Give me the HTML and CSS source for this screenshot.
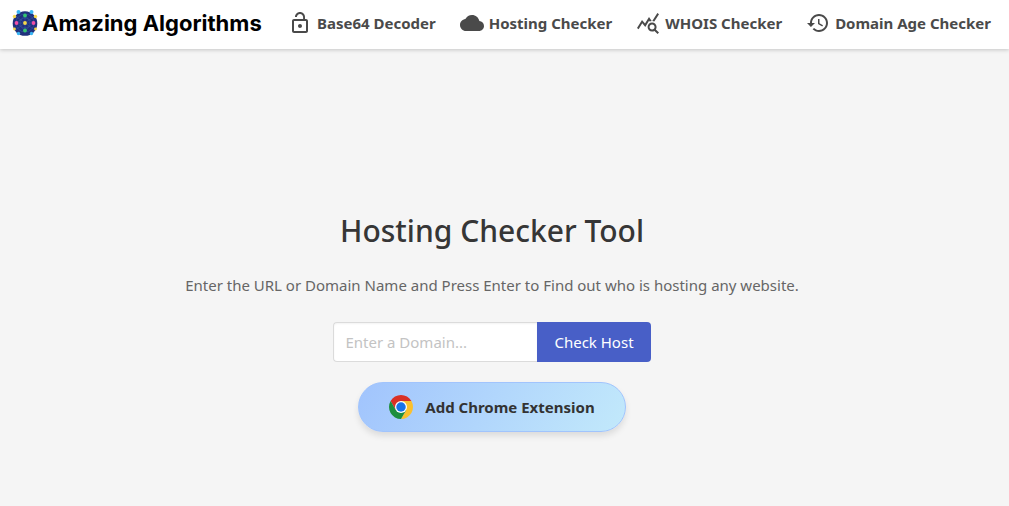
FILE: index.html
```html
<!DOCTYPE html>
<html lang="en">
<head>
  <meta charset="UTF-8">
  <meta name="viewport" content="width=device-width, initial-scale=1.0">
  <title>Hosting Checker Tool</title>
  <link rel="stylesheet" href="styles.css">
</head>
<body>
  <nav class="navbar">
    <a class="brand" href="#">
      <svg class="brand-logo" viewBox="0 0 26 26" aria-hidden="true">
        <circle cx="13" cy="13.5" r="12.3" fill="#20317c"/>
        <g fill="none" stroke="#3b58a8" stroke-width=".5">
          <path d="M13 6L4.500 13l8.500 7.500 8.500-7.500zM13 6v15M4.500 13h17M4 6.500l18 13M22 6.500l-18 13"/>
          <circle cx="13" cy="13" r="5"/>
          <circle cx="13" cy="13" r="9"/>
        </g>
        <g fill="#38b6f5">
          <circle cx="6.500" cy="2" r="2"/>
          <circle cx="19.500" cy="2" r="2"/>
          <circle cx="6.500" cy="23.500" r="1.700"/>
          <circle cx="19.500" cy="23.500" r="1.700"/>
        </g>
        <g fill="#f5d84a">
          <circle cx="2.500" cy="6.500" r="1.700"/>
          <circle cx="23.500" cy="6.500" r="1.700"/>
          <circle cx="2.500" cy="19" r="1.400"/>
          <circle cx="23.500" cy="19" r="1.400"/>
          <circle cx="13" cy="13" r="1.900"/>
        </g>
        <g fill="#35c46f">
          <circle cx="13" cy="5.500" r="1.900"/>
          <circle cx="13" cy="20.500" r="1.900"/>
        </g>
        <g fill="#f04fa5">
          <circle cx="4.500" cy="13" r="1.900"/>
          <circle cx="21.500" cy="13" r="1.900"/>
        </g>
      </svg>
      <span>Amazing Algorithms</span>
    </a>
    <div class="nav-links">
      <a class="nav-item" href="#">
        <svg class="icon" viewBox="0 0 24 24" aria-hidden="true"><path d="M12 17c1.100 0 2-.9 2-2s-.9-2-2-2-2 .9-2 2 .9 2 2 2zm6-9h-1V6c0-2.760-2.240-5-5-5S7 3.240 7 6h1.900c0-1.710 1.390-3.100 3.100-3.100 1.710 0 3.100 1.390 3.100 3.100v2H6c-1.100 0-2 .9-2 2v10c0 1.100.9 2 2 2h12c1.100 0 2-.9 2-2V10c0-1.100-.9-2-2-2zm0 12H6V10h12v10z"/></svg>
        <span>Base64 Decoder</span>
      </a>
      <a class="nav-item" href="#">
        <svg class="icon" viewBox="0 0 24 24" aria-hidden="true"><path d="M19.350 10.040C18.670 6.590 15.640 4 12 4 9.110 4 6.600 5.640 5.350 8.040 2.340 8.360 0 10.910 0 14c0 3.310 2.690 6 6 6h13c2.760 0 5-2.240 5-5 0-2.640-2.050-4.780-4.650-4.960z"/></svg>
        <span>Hosting Checker</span>
      </a>
      <a class="nav-item" href="#">
        <svg class="icon" viewBox="0 0 24 24" aria-hidden="true"><path d="M19.880 18.470c.44-.7.7-1.510.7-2.390 0-2.490-2.010-4.500-4.500-4.500s-4.500 2.010-4.500 4.500 2.010 4.500 4.490 4.500c.88 0 1.700-.26 2.390-.7L21.580 23 23 21.580l-3.120-3.110zm-3.800.11c-1.380 0-2.500-1.120-2.500-2.500s1.120-2.500 2.500-2.500 2.500 1.120 2.500 2.500-1.120 2.500-2.500 2.500zm-.36-8.500c-.74.02-1.450.18-2.100.45l-.55-.83-3.800 6.180-3.010-3.520-3.630 5.810L1 17l5-8 3 3.500L13 6l2.720 4.080zm2.590.5c-.64-.28-1.330-.45-2.050-.49L21.380 2 23 3.180l-4.690 7.400z"/></svg>
        <span>WHOIS Checker</span>
      </a>
      <a class="nav-item" href="#">
        <svg class="icon" viewBox="0 0 24 24" aria-hidden="true"><path d="M13 3c-4.970 0-9 4.030-9 9H1l3.890 3.890.07.14L9 12H6c0-3.870 3.130-7 7-7s7 3.130 7 7-3.130 7-7 7c-1.930 0-3.680-.79-4.940-2.060l-1.420 1.420C8.270 19.990 10.510 21 13 21c4.970 0 9-4.030 9-9s-4.030-9-9-9zm-1 5v5l4.280 2.540.72-1.210-3.500-2.080V8H12z"/></svg>
        <span>Domain Age Checker</span>
      </a>
    </div>
  </nav>

  <main class="hero">
    <h1 class="title">Hosting Checker Tool</h1>
    <p class="subtitle"><label for="domain">Enter the URL or Domain Name and Press Enter to Find out who is hosting any website.</label></p>
    <form class="search">
      <input class="search-input" id="domain" type="text" placeholder="Enter a Domain...">
      <button class="search-btn" type="submit">Check Host</button>
    </form>
    <a class="extension" href="#">
      <svg class="icon" viewBox="0 0 48 48" aria-hidden="true">
        <path fill="#d93025" d="M3.220 12A24 24 0 0 1 44.780 12H24L13.610 30z"/>
        <path fill="#fbc02d" d="M44.780 12A24 24 0 0 1 24 48L34.390 30 24 12z"/>
        <path fill="#1e8e3e" d="M24 48A24 24 0 0 1 3.220 12L13.610 30H34.390z"/>
        <circle cx="24" cy="24" r="12" fill="#fff"/>
        <circle cx="24" cy="24" r="9.500" fill="#1a73e8"/>
      </svg>
      <span>Add Chrome Extension</span>
    </a>
  </main>
</body>
</html>
```
FILE: styles.css
```css
* {
  box-sizing: border-box;
}

body {
  display: flex;
  flex-direction: column;
  min-height: 100vh;
  margin: 0;
  background-color: #f5f5f5;
  color: #4a4a4a;
  font-family: "Noto Sans", "Open Sans", sans-serif;
  font-size: 15px;
}

a {
  color: inherit;
  text-decoration: none;
}

.navbar {
  display: flex;
  align-items: center;
  justify-content: space-between;
  padding: 0 18px 3px 12px;
  height: 49px;
  background-color: #fff;
  box-shadow: 0 1px 4px rgba(0, 0, 0, 0.2);
}

.brand {
  display: flex;
  align-items: center;
  gap: 4px;
  color: #000;
  font-family: Inter, sans-serif;
  font-size: 22px;
  font-weight: 700;
  white-space: nowrap;
}

.brand-logo {
  width: 26px;
  height: 26px;
}

.nav-links {
  display: flex;
  gap: 24px;
}

.nav-item {
  display: flex;
  align-items: center;
  gap: 5px;
  font-weight: 700;
  white-space: nowrap;
}

.icon {
  width: 24px;
  height: 24px;
  fill: currentColor;
}

.hero {
  display: flex;
  flex: 1;
  flex-direction: column;
  align-items: center;
  justify-content: flex-end;
  padding: 0 25px 74px 0;
}

.title {
  margin: 0 0 22px;
  color: #363636;
  font-size: 30px;
  font-weight: 500;
  line-height: 40px;
}

.subtitle {
  margin: 0 0 25px;
  color: #666;
  line-height: 24px;
}

.search {
  display: flex;
  margin-bottom: 20px;
}

.search-input,
.search-btn {
  height: 40px;
  font-family: inherit;
  font-size: 15px;
}

.search-input {
  width: 204px;
  padding: 0 11px;
  border: 1px solid #dbdbdb;
  border-right: 0;
  border-radius: 4px 0 0 4px;
  box-shadow: inset 0 1px 2px rgba(10, 10, 10, 0.05);
  color: #363636;
}

.search-input::placeholder {
  color: #c3c3c3;
}

.search-btn {
  padding: 0 17px;
  border: 0;
  border-radius: 0 4px 4px 0;
  background-color: #485fc7;
  color: #fff;
  cursor: pointer;
}

.extension {
  display: flex;
  align-items: center;
  gap: 12px;
  height: 50px;
  padding: 0 30px;
  border: 1px solid #a1c4fd;
  border-radius: 25px;
  background-image: linear-gradient(120deg, #a1c4fd, #c2e9fb);
  box-shadow: 0 4px 6px rgba(0, 0, 0, 0.1);
  color: #333;
  font-weight: 700;
}
```
